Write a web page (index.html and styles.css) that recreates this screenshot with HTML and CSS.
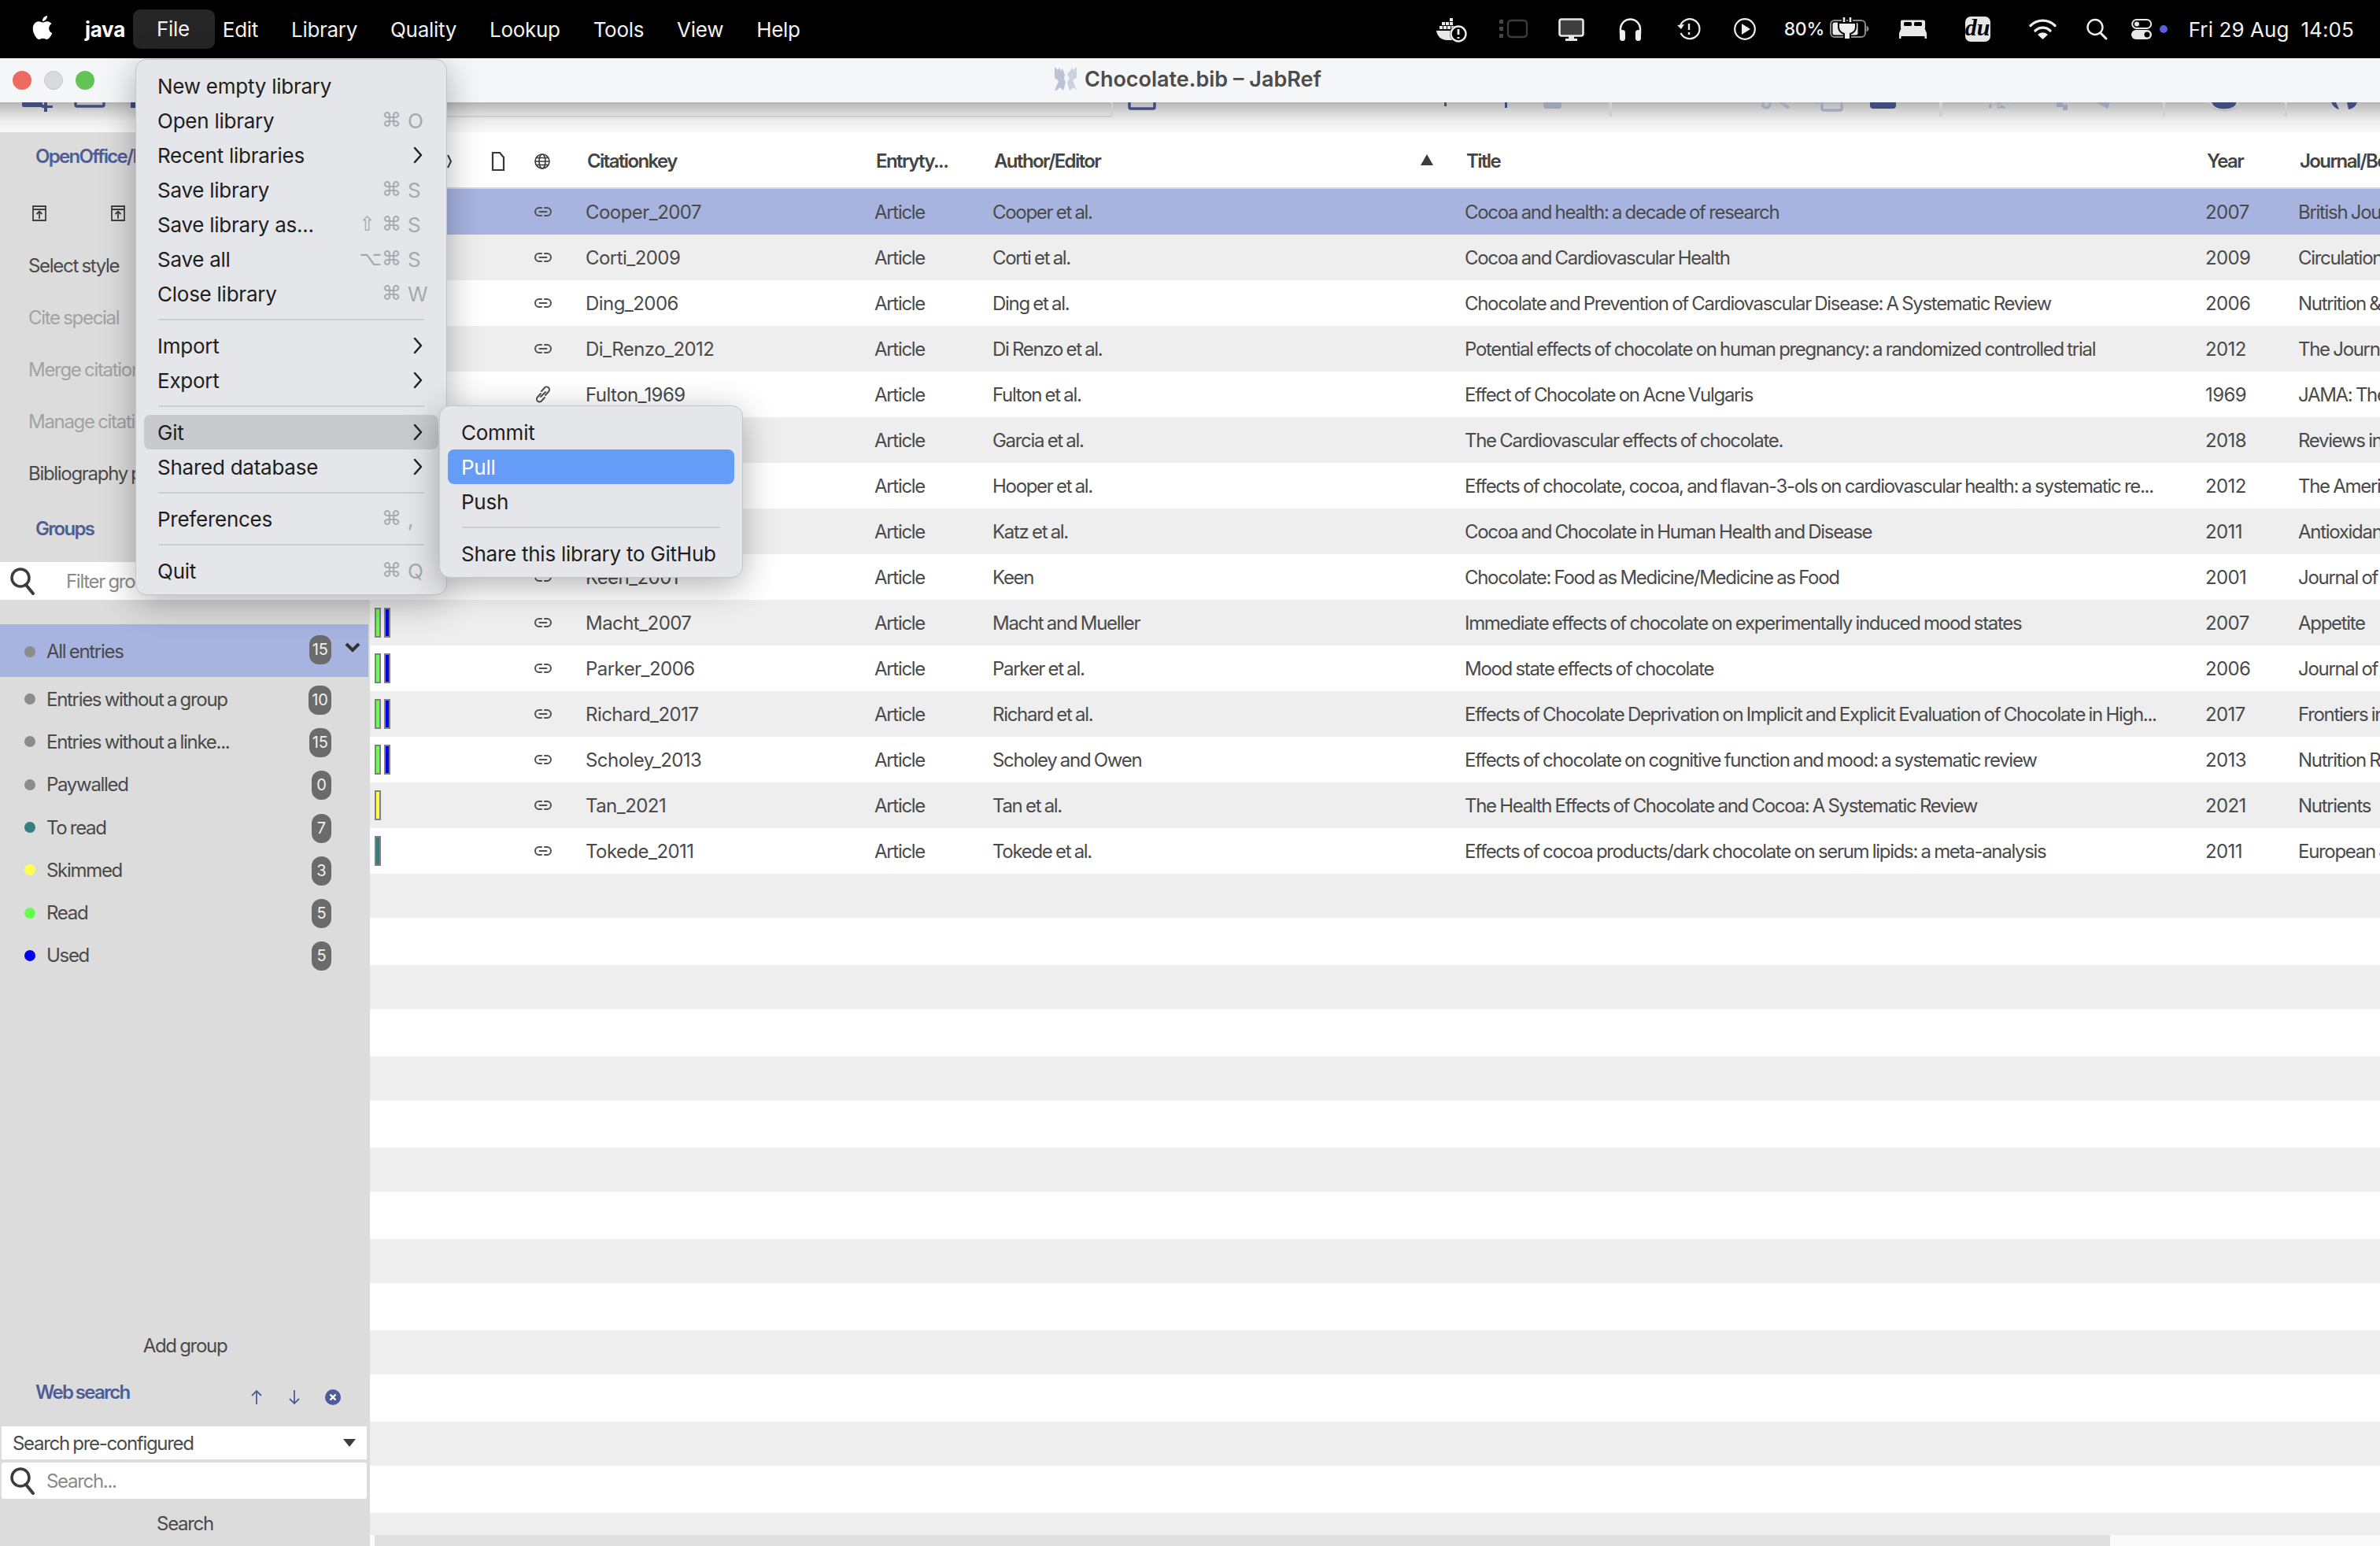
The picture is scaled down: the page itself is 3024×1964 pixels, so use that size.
FILE: index.html
```html
<!DOCTYPE html>
<html lang="en">
<head>
<meta charset="utf-8">
<title>Chocolate.bib – JabRef</title>
<link rel="stylesheet" href="styles.css">
</head>
<body>
<svg class="defs" width="0" height="0" aria-hidden="true">
  <symbol id="link" viewBox="0 0 22 14">
    <path d="M9 2H6a5 5 0 0 0 0 10h3M13 2h3a5 5 0 0 1 0 10h-3M6.500 7h9" fill="none" stroke="#505050" stroke-width="2" stroke-linecap="round"/>
  </symbol>
  <symbol id="lens" viewBox="0 0 34 36">
    <circle cx="14" cy="14" r="11" fill="none" stroke="#3c3c3c" stroke-width="3.500"/>
    <path d="M21 23l9 11" stroke="#3c3c3c" stroke-width="4" stroke-linecap="round"/>
  </symbol>
  <symbol id="chev" viewBox="0 0 12 22">
    <path d="M2 2l8 9-8 9" fill="none" stroke="#222" stroke-width="2.500" stroke-linecap="round" stroke-linejoin="round"/>
  </symbol>
  <symbol id="doc" viewBox="0 0 20 26">
    <path d="M3 2h9l5 6v16H3z" fill="none" stroke="#383838" stroke-width="2.200"/>
  </symbol>
  <symbol id="ooimp" viewBox="0 0 20 22">
    <path d="M2 2h16v18H2zM2 6h16M10 18v-9M6.500 12l3.500-3.500 3.500 3.500" fill="none" stroke="#3e3e3e" stroke-width="1.800"/>
  </symbol>
</svg>

<header class="menubar">
  <svg class="apple" width="30" height="36" viewBox="0 0 24 24"><path fill="#fff" d="M12.152 6.896c-.948 0-2.415-1.078-3.96-1.04-2.04.027-3.91 1.183-4.961 3.014-2.117 3.675-.546 9.103 1.519 12.09 1.013 1.454 2.208 3.09 3.792 3.039 1.52-.065 2.09-.987 3.935-.987 1.831 0 2.35.987 3.96.948 1.637-.026 2.676-1.48 3.676-2.948 1.156-1.688 1.636-3.325 1.662-3.415-.039-.013-3.182-1.221-3.22-4.857-.026-3.04 2.48-4.494 2.597-4.559-1.429-2.09-3.623-2.324-4.39-2.376-2-.156-3.675 1.09-4.61 1.09zM15.53 3.83c.843-1.012 1.4-2.427 1.245-3.83-1.207.052-2.662.805-3.532 1.818-.78.896-1.454 2.338-1.273 3.714 1.338.104 2.715-.688 3.559-1.701"/></svg>
  <nav class="menus">
    <span class="app">java</span>
    <span class="menu-active">File</span>
    <span>Edit</span><span>Library</span><span>Quality</span><span>Lookup</span><span>Tools</span><span>View</span><span>Help</span>
  </nav>
  <div class="status">
    <svg width="81" height="74" viewBox="0 0 81 74"><g fill="#e8e8e8"><rect x="18" y="23" width="4" height="4"/><rect x="8" y="28" width="4" height="4"/><rect x="13" y="28" width="4" height="4"/><rect x="18" y="28" width="4" height="4"/><rect x="5" y="33" width="4" height="4"/><rect x="10" y="33" width="4" height="4"/><rect x="15" y="33" width="4" height="4"/><rect x="20" y="33" width="4" height="4"/><path d="M1 39h20c0 6 2 8 3 11-2 1-4 1-9 1C7 51 2 46 1 39z"/></g><circle cx="29" cy="43" r="11" fill="#000"/><circle cx="29" cy="43" r="9.500" fill="none" stroke="#eee" stroke-width="2.400"/><path d="M29 37v7M29 47v2" stroke="#eee" stroke-width="2.800"/></svg>
    <svg width="75" height="74" viewBox="0 0 75 74"><g fill="#474747"><rect x="0" y="25" width="5" height="5"/><rect x="0" y="34" width="5" height="5"/><rect x="0" y="43" width="5" height="5"/></g><rect x="11" y="26" width="24" height="21" rx="4" fill="none" stroke="#3c3c3c" stroke-width="2.400"/></svg>
    <svg width="77" height="74" viewBox="0 0 77 74"><rect x="1.500" y="24.500" width="30" height="21" rx="2.500" fill="#3f3f3f" stroke="#e8e8e8" stroke-width="2.600"/><path d="M13 46h7v3h4v3H9v-3h4z" fill="#e8e8e8"/></svg>
    <svg width="74" height="74" viewBox="0 0 74 74"><path d="M2 43V37a12.500 12.500 0 0 1 25 0v6" fill="none" stroke="#eee" stroke-width="2.500"/><rect x="1" y="38" width="7" height="14" rx="3.500" fill="#eee"/><rect x="21" y="38" width="7" height="14" rx="3.500" fill="#eee"/></svg>
    <svg width="72" height="74" viewBox="0 0 72 74"><path d="M4 33a12.500 12.500 0 1 1 .6 9" fill="none" stroke="#eee" stroke-width="2.200"/><path d="M0 32l5 5 4-6z" fill="#eee"/><path d="M15 30v8M15 41v3" stroke="#eee" stroke-width="2.400"/></svg>
    <svg width="64" height="74" viewBox="0 0 64 74"><circle cx="14" cy="37" r="12.800" fill="none" stroke="#eee" stroke-width="2.200"/><path d="M10 30l11 7-11 7z" fill="#eee"/></svg>
    <span class="batt-text">80%</span>
    <svg width="89" height="74" viewBox="0 0 89 74"><rect x="2" y="26" width="44" height="21" rx="5" fill="none" stroke="#8a8a8a" stroke-width="2"/><rect x="4.500" y="28.500" width="32" height="16" rx="2.500" fill="#e8e8e8"/><path d="M47.500 33v7c2 0 3-2 3-3.500S49.500 33 47.500 33z" fill="#8a8a8a"/><path d="M19 24v7M27 24v7" stroke="#000" stroke-width="6"/><path d="M19 22v8M27 22v8" stroke="#eee" stroke-width="2.600"/><path d="M12 29h22v5c0 6-4 8-7 9v7h-8v-7c-3-1-7-3-7-9z" fill="#eee" stroke="#000" stroke-width="2"/></svg>
    <svg width="84" height="74" viewBox="0 0 84 74"><path d="M4 25.500h27a2 2 0 0 1 2 2V36H2v-8.500a2 2 0 0 1 2-2z" fill="#e8e8e8"/><rect x="6" y="28" width="10" height="5" rx="1.500" fill="#000"/><rect x="19" y="28" width="10" height="5" rx="1.500" fill="#000"/><path d="M3 35h29l3 7v7h-2.500v-3H2.500v3H0v-7z" fill="#e8e8e8"/></svg>
    <span class="du">du</span>
    <svg width="73" height="74" viewBox="0 0 73 74"><path d="M2 32.500a22 22 0 0 1 31 0M8 39a13.500 13.500 0 0 1 19 0" fill="none" stroke="#eee" stroke-width="3.200" stroke-linecap="round"/><path d="M11 44a9 9 0 0 1 13 0l-6.500 6z" fill="#eee"/></svg>
    <svg width="57" height="74" viewBox="0 0 57 74"><circle cx="11" cy="34.500" r="9.500" fill="none" stroke="#eee" stroke-width="2.400"/><path d="M18 42l7 7" stroke="#eee" stroke-width="3" stroke-linecap="round"/></svg>
    <svg width="73" height="74" viewBox="0 0 73 74"><rect x="1.200" y="25" width="24" height="11" rx="5.500" fill="none" stroke="#e8e8e8" stroke-width="2"/><circle cx="7" cy="30.500" r="3" fill="#e8e8e8"/><rect x="0" y="38" width="26" height="12" rx="6" fill="#e8e8e8"/><circle cx="20" cy="44" r="3.500" fill="#000"/><circle cx="41" cy="37" r="5" fill="#5a5fe0"/></svg>
    <span class="clock">Fri 29 Aug&nbsp;&nbsp;14:05</span>
  </div>
</header>

<div class="titlebar">
  <div class="lights"><i class="red"></i><i class="off"></i><i class="green"></i></div>
  <div class="wintitle">
    <svg width="30" height="30" viewBox="0 0 30 30"><path d="M1 0l4 4 2-3 2 4 2-3 3 8-1 5 2 5-3 10-4-4-5 4H1l5-12L1 14z" fill="#bcc3d8"/><path d="M29 0l-4 4-2-3-2 4-4 4 3 6-3 5 3 10 5-4 4 4-5-13 5-3z" fill="#ccd1e0"/></svg>
    <span>Chocolate.bib – JabRef</span>
  </div>
</div>

<div class="toolbar">
  <svg width="3024" height="38" viewBox="0 0 3024 38">
    <g fill="#3f4d7e">
      <path d="M28 0h26v6H30q-2 0-2-2zM56 0h4v4h7v3h-7v5h-4V7h-3V3h3z"/>
      <path d="M96 0v3q0 2 2 2h32q2 0 2-2V0" fill="none" stroke="#3f4d7e" stroke-width="3.500"/>
      <rect x="166" y="0" width="6" height="7"/>
      <path d="M1435 0v6q0 2 2 2h28q2 0 2-2V0" fill="none" stroke="#3f4d7e" stroke-width="3.500"/>
      <rect x="1835" y="0" width="3" height="5"/><rect x="1912" y="0" width="3" height="7"/>
      <path d="M2376 0h33v4q0 4-4 4h-25q-4 0-4-4z"/>
      <path d="M2810 0h33q-3 9-16 9t-17-9z"/>
      <path d="M2962 0h6l4 9q-7-2-10-9zM2982 0h13q-3 8-11 9z"/>
    </g>
    <g fill="none" stroke="#a0a8bc" stroke-width="3.500">
      <path d="M2240 0c-1 5 1 7 4 7s5-2 5-7"/>
      <path d="M2262 0l11 7"/>
      <path d="M2315 0v8q0 2 2 2h21q2 0 2-2V0M2306 0h5"/>
      <path d="M2808 0c0 6 8 10 18 10s17-4 17-10" stroke="#c2c2c6"/>
    </g>
    <g fill="#9aa3b8">
      <path d="M1961 0h23v4q0 4-4 4h-15q-4 0-4-4z"/>
      <path d="M2613 0h8v3h6v7h-6V6h-8z"/>
      <path d="M2663 0h18l-3 8z"/>
      <path d="M2528 2h2v5h-3M2536 0h2v7h10v-1M2540 0h2v6h-5M2556 0l4 3M2552 0l-2 3" stroke="#a8aebf" stroke-width="1"/>
    </g>
    <path d="M568 18h843q2 0 2-2V0" fill="none" stroke="#cfcfcf" stroke-width="2"/>
    <g fill="#cfcfcf"><rect x="2045" width="3" height="18"/><rect x="2464" width="4" height="18"/><rect x="2748" width="3" height="18"/><rect x="2903" width="3" height="18"/></g>
  </svg>
</div>

<main class="main">
  <aside class="sidebar">
    <h2 class="tab-title">OpenOffice/LibreOffice</h2>
    <div class="oo-icons">
      <svg width="20" height="22"><use href="#ooimp"/></svg>
      <svg width="20" height="22"><use href="#ooimp"/></svg>
    </div>
    <div class="oo-btn">Select style</div>
    <div class="oo-btn is-off">Cite special</div>
    <div class="oo-btn is-off">Merge citations</div>
    <div class="oo-btn is-off">Manage citations</div>
    <div class="oo-btn">Bibliography panel</div>

    <h2 class="groups-title">Groups</h2>
    <div class="filter">
      <svg width="34" height="36"><use href="#lens"/></svg>
      <span>Filter groups</span>
    </div>
    <ul class="groups">
      <li class="group is-sel"><i class="dot"></i><span class="gname">All entries</span><b class="badge">15</b><svg class="gchev" width="20" height="14" viewBox="0 0 20 14"><path d="M2 2l8 8 8-8" fill="none" stroke="#333" stroke-width="4"/></svg></li>
      <li class="group"><i class="dot"></i><span class="gname">Entries without a group</span><b class="badge">10</b></li>
      <li class="group"><i class="dot"></i><span class="gname">Entries without a linke...</span><b class="badge">15</b></li>
      <li class="group"><i class="dot"></i><span class="gname">Paywalled</span><b class="badge">0</b></li>
      <li class="group"><i class="dot c-teal"></i><span class="gname">To read</span><b class="badge">7</b></li>
      <li class="group"><i class="dot c-yellow"></i><span class="gname">Skimmed</span><b class="badge">3</b></li>
      <li class="group"><i class="dot c-green"></i><span class="gname">Read</span><b class="badge">5</b></li>
      <li class="group"><i class="dot c-blue"></i><span class="gname">Used</span><b class="badge">5</b></li>
    </ul>
    <div class="side-fill"></div>
    <div class="side-btn add-group">Add group</div>
    <div class="web-head">
      <h2>Web search</h2>
      <svg width="18" height="20" viewBox="0 0 18 20"><path d="M9 19V2M3 8l6-6 6 6" fill="none" stroke="#4f5d97" stroke-width="1.800"/></svg>
      <svg width="18" height="20" viewBox="0 0 18 20"><path d="M9 1v17M3 12l6 6 6-6" fill="none" stroke="#4f5d97" stroke-width="1.800"/></svg>
      <svg width="20" height="20" viewBox="0 0 20 20"><circle cx="10" cy="10" r="10" fill="#4f5d97"/><path d="M6.500 6.500l7 7M13.500 6.500l-7 7" stroke="#fff" stroke-width="2.400"/></svg>
    </div>
    <div class="web-select"><span>Search pre-configured</span><i class="tri"></i></div>
    <div class="web-input">
      <svg width="34" height="36"><use href="#lens"/></svg>
      <span>Search...</span>
    </div>
    <div class="side-btn search-btn">Search</div>
  </aside>

  <section class="table">
    <div class="thead">
      <span class="th-icons">
        <svg class="code-ic" width="14" height="20" viewBox="0 0 14 20"><path d="M8 2l4 8-4 8" fill="none" stroke="#3a3a3a" stroke-width="2"/></svg>
        <svg class="doc-ic" width="20" height="26"><use href="#doc"/></svg>
        <svg width="20" height="20" viewBox="0 0 20 20"><g fill="none" stroke="#383838" stroke-width="1.600"><circle cx="10" cy="10" r="9"/><ellipse cx="10" cy="10" rx="4" ry="9"/><path d="M1 10h18M2.500 5.500h15M2.500 14.500h15"/></g></svg>
      </span>
      <span class="c-key">Citationkey</span>
      <span class="c-type">Entryty...</span>
      <span class="c-auth">Author/Editor<i class="sort"></i></span>
      <span class="c-title">Title</span>
      <span class="c-year">Year</span>
      <span class="c-jour">Journal/Book</span>
    </div>

    <div class="row is-sel"><span class="r-bars"></span><svg class="lk" width="22" height="14"><use href="#link"/></svg><span class="c-key">Cooper_2007</span><span class="c-type">Article</span><span class="c-auth">Cooper et al.</span><span class="c-title">Cocoa and health: a decade of research</span><span class="c-year">2007</span><span class="c-jour">British Journal of Nutrition</span></div>
    <div class="row"><span class="r-bars"></span><svg class="lk" width="22" height="14"><use href="#link"/></svg><span class="c-key">Corti_2009</span><span class="c-type">Article</span><span class="c-auth">Corti et al.</span><span class="c-title">Cocoa and Cardiovascular Health</span><span class="c-year">2009</span><span class="c-jour">Circulation</span></div>
    <div class="row"><span class="r-bars"></span><svg class="lk" width="22" height="14"><use href="#link"/></svg><span class="c-key">Ding_2006</span><span class="c-type">Article</span><span class="c-auth">Ding et al.</span><span class="c-title">Chocolate and Prevention of Cardiovascular Disease: A Systematic Review</span><span class="c-year">2006</span><span class="c-jour">Nutrition &amp; Metabolism</span></div>
    <div class="row"><span class="r-bars"></span><svg class="lk" width="22" height="14"><use href="#link"/></svg><span class="c-key">Di_Renzo_2012</span><span class="c-type">Article</span><span class="c-auth">Di Renzo et al.</span><span class="c-title">Potential effects of chocolate on human pregnancy: a randomized controlled trial</span><span class="c-year">2012</span><span class="c-jour">The Journal</span></div>
    <div class="row"><span class="r-bars"></span><svg class="lk" width="22" height="22" viewBox="0 0 22 22"><path d="M9 7l4-4.500a3.500 3.500 0 0 1 5 5L14 12M13 15l-4 4.500a3.500 3.500 0 0 1-5-5L8 10M8 14l6-6" fill="none" stroke="#505050" stroke-width="2" stroke-linecap="round"/></svg><span class="c-key">Fulton_1969</span><span class="c-type">Article</span><span class="c-auth">Fulton et al.</span><span class="c-title">Effect of Chocolate on Acne Vulgaris</span><span class="c-year">1969</span><span class="c-jour">JAMA: The Journal</span></div>
    <div class="row"><span class="r-bars"></span><svg class="lk" width="22" height="14"><use href="#link"/></svg><span class="c-key">Garcia_2018</span><span class="c-type">Article</span><span class="c-auth">Garcia et al.</span><span class="c-title">The Cardiovascular effects of chocolate.</span><span class="c-year">2018</span><span class="c-jour">Reviews in</span></div>
    <div class="row"><span class="r-bars"></span><svg class="lk" width="22" height="14"><use href="#link"/></svg><span class="c-key">Hooper_2012</span><span class="c-type">Article</span><span class="c-auth">Hooper et al.</span><span class="c-title">Effects of chocolate, cocoa, and flavan-3-ols on cardiovascular health: a systematic re...</span><span class="c-year">2012</span><span class="c-jour">The American</span></div>
    <div class="row"><span class="r-bars"></span><svg class="lk" width="22" height="14"><use href="#link"/></svg><span class="c-key">Katz_2011</span><span class="c-type">Article</span><span class="c-auth">Katz et al.</span><span class="c-title">Cocoa and Chocolate in Human Health and Disease</span><span class="c-year">2011</span><span class="c-jour">Antioxidants</span></div>
    <div class="row"><span class="r-bars"></span><svg class="lk" width="22" height="14"><use href="#link"/></svg><span class="c-key">Keen_2001</span><span class="c-type">Article</span><span class="c-auth">Keen</span><span class="c-title">Chocolate: Food as Medicine/Medicine as Food</span><span class="c-year">2001</span><span class="c-jour">Journal of</span></div>
    <div class="row"><span class="r-bars"><i class="b-green"></i><i class="b-blue"></i></span><svg class="lk" width="22" height="14"><use href="#link"/></svg><span class="c-key">Macht_2007</span><span class="c-type">Article</span><span class="c-auth">Macht and Mueller</span><span class="c-title">Immediate effects of chocolate on experimentally induced mood states</span><span class="c-year">2007</span><span class="c-jour">Appetite</span></div>
    <div class="row"><span class="r-bars"><i class="b-green"></i><i class="b-blue"></i></span><svg class="lk" width="22" height="14"><use href="#link"/></svg><span class="c-key">Parker_2006</span><span class="c-type">Article</span><span class="c-auth">Parker et al.</span><span class="c-title">Mood state effects of chocolate</span><span class="c-year">2006</span><span class="c-jour">Journal of</span></div>
    <div class="row"><span class="r-bars"><i class="b-green"></i><i class="b-blue"></i></span><svg class="lk" width="22" height="14"><use href="#link"/></svg><span class="c-key">Richard_2017</span><span class="c-type">Article</span><span class="c-auth">Richard et al.</span><span class="c-title">Effects of Chocolate Deprivation on Implicit and Explicit Evaluation of Chocolate in High...</span><span class="c-year">2017</span><span class="c-jour">Frontiers in</span></div>
    <div class="row"><span class="r-bars"><i class="b-green"></i><i class="b-blue"></i></span><svg class="lk" width="22" height="14"><use href="#link"/></svg><span class="c-key">Scholey_2013</span><span class="c-type">Article</span><span class="c-auth">Scholey and Owen</span><span class="c-title">Effects of chocolate on cognitive function and mood: a systematic review</span><span class="c-year">2013</span><span class="c-jour">Nutrition Reviews</span></div>
    <div class="row"><span class="r-bars"><i class="b-yellow"></i></span><svg class="lk" width="22" height="14"><use href="#link"/></svg><span class="c-key">Tan_2021</span><span class="c-type">Article</span><span class="c-auth">Tan et al.</span><span class="c-title">The Health Effects of Chocolate and Cocoa: A Systematic Review</span><span class="c-year">2021</span><span class="c-jour">Nutrients</span></div>
    <div class="row"><span class="r-bars"><i class="b-teal"></i></span><svg class="lk" width="22" height="14"><use href="#link"/></svg><span class="c-key">Tokede_2011</span><span class="c-type">Article</span><span class="c-auth">Tokede et al.</span><span class="c-title">Effects of cocoa products/dark chocolate on serum lipids: a meta-analysis</span><span class="c-year">2011</span><span class="c-jour">European Journal</span></div>

    <div class="stripes"></div>
    <div class="hscroll"><div class="hthumb"></div></div>
  </section>
</main>

<div class="popup file-menu">
  <div class="mi"><span>New empty library</span></div>
  <div class="mi"><span>Open library</span><kbd><span>⌘</span><span class="k">O</span></kbd></div>
  <div class="mi"><span>Recent libraries</span><svg width="12" height="22"><use href="#chev"/></svg></div>
  <div class="mi"><span>Save library</span><kbd><span>⌘</span><span class="k">S</span></kbd></div>
  <div class="mi"><span>Save library as...</span><kbd><span>⇧ ⌘</span><span class="k">S</span></kbd></div>
  <div class="mi"><span>Save all</span><kbd><span>⌥⌘</span><span class="k">S</span></kbd></div>
  <div class="mi"><span>Close library</span><kbd><span>⌘</span><span class="k">W</span></kbd></div>
  <hr class="sep">
  <div class="mi"><span>Import</span><svg width="12" height="22"><use href="#chev"/></svg></div>
  <div class="mi"><span>Export</span><svg width="12" height="22"><use href="#chev"/></svg></div>
  <hr class="sep">
  <div class="mi is-open"><span>Git</span><svg width="12" height="22"><use href="#chev"/></svg></div>
  <div class="mi"><span>Shared database</span><svg width="12" height="22"><use href="#chev"/></svg></div>
  <hr class="sep">
  <div class="mi"><span>Preferences</span><kbd><span>⌘</span><span class="k">,</span></kbd></div>
  <hr class="sep">
  <div class="mi"><span>Quit</span><kbd><span>⌘</span><span class="k">Q</span></kbd></div>
</div>

<div class="popup git-menu">
  <div class="mi"><span>Commit</span></div>
  <div class="mi is-hover"><span>Pull</span></div>
  <div class="mi"><span>Push</span></div>
  <hr class="sep">
  <div class="mi"><span>Share this library to GitHub</span></div>
</div>
</body>
</html>
```
FILE: styles.css
```css
* { box-sizing: border-box; }
html, body { margin: 0; padding: 0; }
body {
  width: 3024px; height: 1964px; overflow: hidden;
  display: flex; flex-direction: column;
  font-family: Inter, "Liberation Sans", sans-serif;
  color: #4a4a4a; background: #fff;
}
.defs { position: absolute; }
h2 { margin: 0; font: inherit; }

/* macOS menu bar */
.menubar { height: 74px; flex: none; background: #000; color: #fff; display: flex; align-items: center; font-size: 26px; }
.apple { margin-left: 39px; margin-right: 39px; flex: none; margin-top: -4px; }
.menus { display: flex; gap: 42px; align-items: center; font-size: 26px; color: #f2f2f2; letter-spacing: -.3px; }
.app { font-weight: 700; color: #fff; }
.menu-active { background: #262626; border-radius: 9px; height: 50px; line-height: 50px; padding: 0 32px 0 30px; margin: 0 -32px; }
.status { margin-left: auto; padding-right: 33px; display: flex; align-items: center; color: #f0f0f0; }
.status svg { flex: none; display: block; }
.batt-text { width: 57px; font-size: 23px; font-weight: 500; letter-spacing: -.3px; }
.du { width: 32px; height: 32px; margin-right: 49px; background: #e6e6e6; color: #000; border-radius: 7px; text-align: center; font: italic 700 30px/28px "Liberation Serif", serif; }
.clock { font-size: 26px; font-weight: 400; letter-spacing: .1px; }

/* window chrome */
.titlebar { height: 56px; flex: none; background: #f5f6f8; display: flex; align-items: center; position: relative; }
.lights { display: flex; gap: 16px; padding-left: 16px; }
.lights i { width: 24px; height: 24px; border-radius: 50%; display: block; }
.red { background: #ec6a5e; }
.off { background: #d9dadc; border: 1px solid #c6c7c9; }
.green { background: #61c454; }
.wintitle { position: absolute; left: 1339px; top: 11px; display: flex; align-items: center; gap: 9px; font-size: 27px; font-weight: 600; color: #4c4c4c; letter-spacing: 0; height: 30px; }
.toolbar { height: 38px; flex: none; background: linear-gradient(#b5b5b5 0, #d4d4d4 30%, #eeeeee 65%, #f8f8f8 100%); }
.toolbar svg { display: block; }

.main { flex: 1; display: flex; min-height: 0; }

/* side pane */
.sidebar { width: 470px; flex: none; background: #dcdcdc; display: flex; flex-direction: column; font-size: 24px; letter-spacing: -1.3px; word-spacing: -1px; overflow: hidden; }
.tab-title { height: 62px; flex: none; line-height: 62px; padding-left: 45px; font-weight: 600; color: #4f5d97; white-space: nowrap; letter-spacing: -1.7px; }
.oo-icons { height: 75px; flex: none; display: flex; gap: 80px; padding: 30px 0 0 40px; }
.oo-btn { height: 66px; flex: none; line-height: 66px; padding-left: 36px; white-space: nowrap; }
.is-off { color: #a2a2a2; }
.groups-title { height: 79px; flex: none; line-height: 74px; padding-left: 45px; font-weight: 600; color: #4f5d97; letter-spacing: -1.7px; }
.filter { height: 48px; flex: none; background: #fff; display: flex; align-items: center; padding-left: 12px; gap: 38px; color: #8a8a8a; }
.groups { list-style: none; margin: 31px 0 0; padding: 0; }
.group { height: 54.3px; display: flex; align-items: center; padding-left: 31px; width: 468px; }
.group.is-sel { height: 67px; background: #a7b4e0; position: relative; }
.dot { width: 14px; height: 14px; border-radius: 50%; background: #8c8c8c; flex: none; margin: 2px 14px 0 0; }
.gname { flex: 1; white-space: nowrap; margin-top: 2px; }
.badge { min-width: 25px; height: 37px; margin: 4px 47px 0 0; padding: 0 4px; border-radius: 12px; background: #6b6b6b; color: #f0f0f0; font-size: 20px; font-weight: 400; line-height: 37px; text-align: center; letter-spacing: 0; }
.is-sel .badge { margin-top: -2px; }
.gchev { position: absolute; right: 10px; top: 23px; }
.c-teal { background: #338080; }
.c-yellow { background: #ffff4d; }
.c-green { background: #66ff4d; }
.c-blue { background: #0000f0; }
.side-fill { flex: 1; }
.side-btn { text-align: center; flex: none; }
.add-group { height: 56px; line-height: 58px; }
.web-head { height: 75px; flex: none; display: flex; align-items: center; padding-left: 45px; gap: 30px; color: #4f5d97; font-weight: 600; letter-spacing: -1.7px; }
.web-head h2 { width: 242px; margin-top: -12px; }
.web-select { height: 42px; flex: none; margin: 0 4px 0 2px; background: #fff; display: flex; align-items: center; justify-content: space-between; padding: 0 14px; }
.tri { border: 8px solid transparent; border-top: 10px solid #3c3c3c; border-bottom: 0; }
.web-input { height: 46px; flex: none; margin: 4px 4px 0 2px; background: #fff; border-radius: 3px; display: flex; align-items: center; padding-left: 10px; gap: 13px; color: #8a8a8a; }
.search-btn { height: 60px; line-height: 64px; }

/* entry table */
.table { flex: 1; min-width: 0; display: flex; flex-direction: column; font-size: 24px; letter-spacing: -1.3px; word-spacing: -1px; background: #fff; overflow: hidden; }
.thead { height: 72px; flex: none; display: flex; align-items: center; background: #fff; border-bottom: 2px solid #d8d8d8; font-weight: 600; color: #444; white-space: nowrap; letter-spacing: -1.6px; padding-top: 3px; }
.th-icons { width: 276px; flex: none; display: flex; align-items: center; }
.code-ic { margin-left: 91px; }
.doc-ic { margin: 0 0 0 48px; }
.th-icons svg:last-child { margin-left: 36px; }
.row { height: 58px; flex: none; display: flex; align-items: center; white-space: nowrap; background: #fff; }
.row:nth-child(odd) { background: #eeeeee; }
.row.is-sel { background: #a7b4e0; }
.r-bars { width: 209px; flex: none; display: flex; gap: 4px; padding-left: 6px; }
.r-bars i { width: 8px; height: 38px; border: 2px solid #808080; display: block; }
.b-green { background: #66ff4d; }
.b-blue { background: #0000f0; }
.b-yellow { background: #ffff4d; }
.b-teal { background: #338080; }
.lk { width: 22px; flex: none; margin-right: 43px; }
.c-key { width: 367px; flex: none; }
.row .c-key { letter-spacing: -.55px; }
.c-type { width: 150px; flex: none; }
.c-auth { width: 600px; flex: none; position: relative; }
.c-title { width: 941px; flex: none; }
.c-year { width: 118px; flex: none; }
.row .c-year { letter-spacing: -.6px; }
.c-jour { flex: none; }
.sort { position: absolute; left: 542px; top: 6px; border: 8px solid transparent; border-bottom: 14px solid #3c3c3c; border-top: 0; }
.stripes { flex: 1; background: repeating-linear-gradient(#eeeeee 0, #eeeeee 56px, #fff 56px, #fff 116px); }
.hscroll { height: 14px; flex: none; background: #fafafa; padding-left: 6px; }
.hthumb { width: 2205px; height: 14px; background: #e0e0e0; }

/* popup menus */
.popup { position: absolute; background: #e4e6e9; border: 1px solid #c4c5c7; border-radius: 14px; box-shadow: 0 10px 44px rgba(0,0,0,.3); padding: 11px 10px 0; font-size: 26px; color: #1e1e1e; letter-spacing: -.25px; }
.file-menu { left: 172px; top: 75px; width: 396px; height: 681px; }
.git-menu { left: 558px; top: 515px; width: 386px; height: 219px; }
.mi { height: 44px; display: flex; align-items: center; justify-content: space-between; padding: 0 20px 0 17px; border-radius: 8px; white-space: nowrap; }
.mi svg { flex: none; }
kbd { display: flex; gap: 8px; font: 400 25px "DejaVu Sans", sans-serif; color: #a6a9ac; letter-spacing: 0; }
.k { width: 19px; font: 400 26px Inter, sans-serif; }
.sep { height: 2px; border: 0; background: #cdcfd2; margin: 10px 18px; }
.is-open { background: #c8cbcd; }
.is-hover { background: #659cf8; color: #fff; }
```
